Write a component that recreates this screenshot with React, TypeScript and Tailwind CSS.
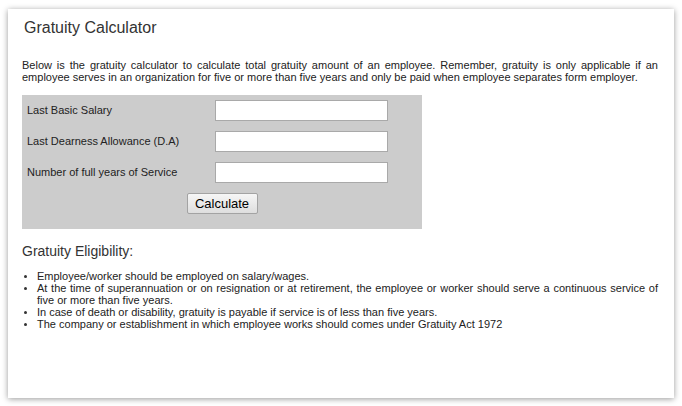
import React from "react";

const fields = [
  "Last Basic Salary",
  "Last Dearness Allowance (D.A)",
  "Number of full years of Service",
];

const rules = [
  "Employee/worker should be employed on salary/wages.",
  "At the time of superannuation or on resignation or at retirement, the employee or worker should serve a continuous service of five or more than five years.",
  "In case of death or disability, gratuity is payable if service is of less than five years.",
  "The company or establishment in which employee works should comes under Gratuity Act 1972",
];

export default function App() {
  return (
    <div className="min-h-[406px] w-[682px] bg-white pt-[9px] pl-[8px] font-['Liberation_Sans',Arial,sans-serif] text-[#222]">
      <div className="h-[389px] w-[666px] bg-white pl-[14px] pr-[16px] pt-[9px] shadow-[0_1px_6px_rgba(0,0,0,0.4)]">
        <h1 className="pl-[2px] text-[16px] leading-[20px] text-[#333]">Gratuity Calculator</h1>

        <p className="mt-[21px] text-justify text-[11px] leading-[12px]">
          Below is the gratuity calculator to calculate total gratuity amount of an employee. Remember, gratuity is only
          applicable if an employee serves in an organization for five or more than five years and only be paid when
          employee separates form employer.
        </p>

        <div className="mt-[12px] flex w-[400px] flex-col gap-[10px] bg-[#cccccc] px-[5px] pt-[5px] pb-[15px]">
          {fields.map((label) => (
            <div key={label} className="flex items-center">
              <label className="w-[188px] text-[11px] text-[#222]">{label}</label>
              <input
                type="text"
                className="h-[21px] w-[173px] border border-[#a9a9a9] bg-white px-[2px] text-[11px] outline-none"
              />
            </div>
          ))}
          <div className="flex justify-center">
            <button className="h-[21px] w-[71px] rounded-[2px] border border-[#a3a3a3] bg-gradient-to-b from-[#f6f6f6] to-[#dedede] text-[13px] leading-[19px] text-black">
              Calculate
            </button>
          </div>
        </div>

        <h2 className="mt-[14px] text-[14px] leading-[17px] text-[#333]">Gratuity Eligibility:</h2>

        <ul className="mt-[10px]">
          {rules.map((r) => (
            <li key={r} className="flex text-[11px] leading-[12px]">
              <span className="flex w-[15px] shrink-0 pt-[5px] pl-[2px]">
                <span className="h-[3px] w-[3px] rounded-full bg-[#333]" />
              </span>
              <span className="text-justify">{r}</span>
            </li>
          ))}
        </ul>
      </div>
    </div>
  );
}
